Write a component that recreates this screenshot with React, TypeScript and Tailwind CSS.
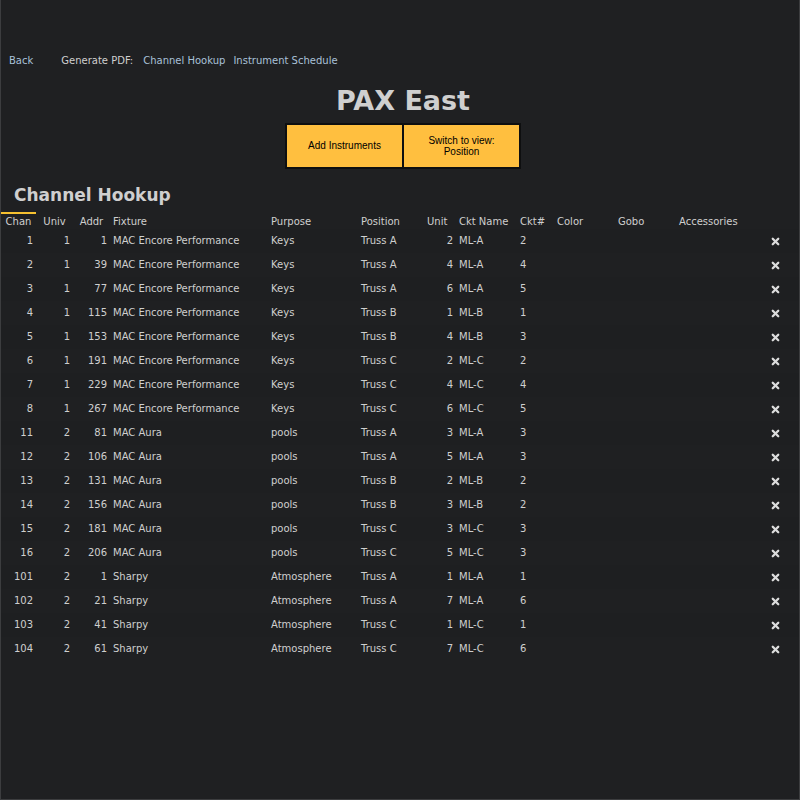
import React from "react";
import { X } from "lucide-react";

type Row = [number, number, number, string, string, string, number, string, number];

const rows: Row[] = [
  [1, 1, 1, "MAC Encore Performance", "Keys", "Truss A", 2, "ML-A", 2],
  [2, 1, 39, "MAC Encore Performance", "Keys", "Truss A", 4, "ML-A", 4],
  [3, 1, 77, "MAC Encore Performance", "Keys", "Truss A", 6, "ML-A", 5],
  [4, 1, 115, "MAC Encore Performance", "Keys", "Truss B", 1, "ML-B", 1],
  [5, 1, 153, "MAC Encore Performance", "Keys", "Truss B", 4, "ML-B", 3],
  [6, 1, 191, "MAC Encore Performance", "Keys", "Truss C", 2, "ML-C", 2],
  [7, 1, 229, "MAC Encore Performance", "Keys", "Truss C", 4, "ML-C", 4],
  [8, 1, 267, "MAC Encore Performance", "Keys", "Truss C", 6, "ML-C", 5],
  [11, 2, 81, "MAC Aura", "pools", "Truss A", 3, "ML-A", 3],
  [12, 2, 106, "MAC Aura", "pools", "Truss A", 5, "ML-A", 3],
  [13, 2, 131, "MAC Aura", "pools", "Truss B", 2, "ML-B", 2],
  [14, 2, 156, "MAC Aura", "pools", "Truss B", 3, "ML-B", 2],
  [15, 2, 181, "MAC Aura", "pools", "Truss C", 3, "ML-C", 3],
  [16, 2, 206, "MAC Aura", "pools", "Truss C", 5, "ML-C", 3],
  [101, 2, 1, "Sharpy", "Atmosphere", "Truss A", 1, "ML-A", 1],
  [102, 2, 21, "Sharpy", "Atmosphere", "Truss A", 7, "ML-A", 6],
  [103, 2, 41, "Sharpy", "Atmosphere", "Truss C", 1, "ML-C", 1],
  [104, 2, 61, "Sharpy", "Atmosphere", "Truss C", 7, "ML-C", 6],
];

const columns = [
  { name: "Chan", width: "w-[35px]", align: "text-center" },
  { name: "Univ", width: "w-[37px]", align: "text-center" },
  { name: "Addr", width: "w-[37px]", align: "text-center" },
  { name: "Fixture", width: "w-[158px]", align: "text-left" },
  { name: "Purpose", width: "w-[90px]", align: "text-left" },
  { name: "Position", width: "w-[66px]", align: "text-left" },
  { name: "Unit", width: "w-8", align: "text-left" },
  { name: "Ckt Name", width: "w-[61px]", align: "text-left" },
  { name: "Ckt#", width: "w-[37px]", align: "text-left" },
  { name: "Color", width: "w-[61px]", align: "text-left" },
  { name: "Gobo", width: "w-[61px]", align: "text-left" },
  { name: "Accessories", width: "", align: "text-left" },
];

const rightAligned = [0, 1, 2, 6];

export default function App() {
  return (
    <div className="min-h-screen border-x border-b border-[#3c3d3f] bg-[#1f2022] font-['Verdana','DejaVu_Sans',sans-serif] text-[10px] leading-3 text-[#cfcfcf]">
      <nav className="flex px-2 pt-[55px]">
        <a href="#back" className="mr-7 text-[#a9c1d9]">Back</a>
        <span className="mr-[10px]">Generate PDF:</span>
        <a href="#channel-hookup" className="mr-2 text-[#a9c1d9]">Channel Hookup</a>
        <a href="#instrument-schedule" className="text-[#a9c1d9]">Instrument Schedule</a>
      </nav>

      <header className="flex flex-col items-center pt-4 pl-[6px]">
        <h1 className="text-[27px] leading-9 font-bold">PAX East</h1>
        <div className="mt-1 flex gap-[2px] border-2 border-[#0e0f10] bg-[#0e0f10] font-['Liberation_Sans',Arial,sans-serif] text-black">
          <button type="button" className="h-[42px] w-[115px] bg-[#ffbf3f]">Add Instruments</button>
          <button type="button" className="h-[42px] w-[115px] bg-[#ffbf3f] leading-[11px]">
            Switch to view:
            <br />
            Position
          </button>
        </div>
      </header>

      <main>
        <h2 className="mt-[14px] mb-[5px] pl-[13px] text-[17px] leading-6 font-bold">Channel Hookup</h2>
        <table className="w-full table-fixed border-separate border-spacing-0">
          <colgroup>
            {columns.map((c) => (
              <col key={c.name} className={c.width} />
            ))}
            <col className="w-[47px]" />
          </colgroup>
          <thead>
            <tr>
              {columns.map((c, i) => (
                <th
                  key={c.name}
                  scope="col"
                  className={`border-t-2 px-[3px] pt-[2px] pb-px font-normal whitespace-nowrap ${c.align} ${i === 0 ? "border-[#f5c030]" : "border-transparent"}`}
                >
                  {c.name}
                </th>
              ))}
              <th aria-label="Remove" />
            </tr>
          </thead>
          <tbody>
            {rows.map((row) => (
              <tr key={row[0]} className="h-6 odd:bg-[#1e1f21]">
                {row.map((cell, i) => (
                  <td
                    key={i}
                    className={`whitespace-nowrap ${rightAligned.includes(i) ? "pr-[3px] text-right" : "pl-[3px] text-left"}`}
                  >
                    {cell}
                  </td>
                ))}
                <td />
                <td />
                <td />
                <td>
                  <button type="button" aria-label={`Remove channel ${row[0]}`} className="mx-auto flex">
                    <X size={11} strokeWidth={5} className="text-[#dcdcdc]" />
                  </button>
                </td>
              </tr>
            ))}
          </tbody>
        </table>
      </main>
    </div>
  );
}
